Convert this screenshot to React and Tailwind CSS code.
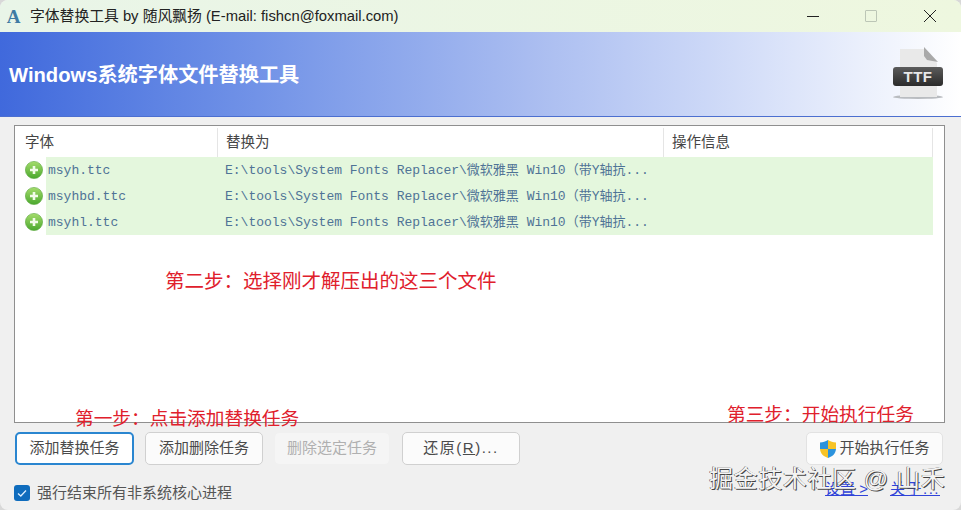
const CJK = 'font-["Liberation_Sans","Noto_Sans_CJK_SC",sans-serif]'
const path = 'E:\\tools\\System Fonts Replacer\\微软雅黑 Win10（带Y轴抗...'

const rows = ['msyh.ttc', 'msyhbd.ttc', 'msyhl.ttc']

function AddIcon() {
  return (
    <svg width="18" height="18" viewBox="0 0 18 18" className="shrink-0">
      <defs>
        <linearGradient id="addGreen" x1="0" y1="0" x2="0" y2="1">
          <stop offset="0" stopColor="#a5dc6c" />
          <stop offset="1" stopColor="#4aa82e" />
        </linearGradient>
      </defs>
      <circle cx="9" cy="9" r="8.6" fill="url(#addGreen)" stroke="#5aa83c" strokeWidth="0.6" />
      <path d="M9 5v8M5 9h8" stroke="#f2fbe9" strokeWidth="2.6" />
    </svg>
  )
}

function ShieldIcon() {
  return (
    <svg width="18" height="20" viewBox="0 0 18 20" className="shrink-0">
      <path d="M9 1C6.5 2.6 4 3.2 1 3.4V10h8z" fill="#2b93dd" />
      <path d="M9 1c2.500 1.600 5 2.200 8 2.400V10H9z" fill="#f7c326" />
      <path d="M1 10c.3 4.500 3.500 7.500 8 9v-9z" fill="#f7c326" />
      <path d="M17 10c-.3 4.500-3.500 7.500-8 9v-9z" fill="#2b93dd" />
    </svg>
  )
}

function TtfIcon() {
  return (
    <div className="relative w-[50px] h-[54px]">
      <svg width="50" height="54" viewBox="0 0 50 54" className="absolute inset-0">
        <ellipse cx="25" cy="50" rx="25" ry="2" fill="#b9bcc0" />
        <path d="M7 2h24l13 14v34H7z" fill="#e9e9e9" />
        <path d="M31 0l14 15-11-2-3-4z" fill="#a9a9a9" />
      </svg>
      <div className="absolute left-0 top-[20px] w-[50px] h-[19px] rounded-[3px] bg-gradient-to-b from-[#5c5c5c] to-[#2b2b2b] flex items-center justify-center text-[15px] font-bold leading-none tracking-[0.5px] text-[#e8e8e8] font-['Liberation_Sans',sans-serif]">
        TTF
      </div>
    </div>
  )
}

function Btn({ children, className = '' }) {
  return (
    <div className={`h-[33px] flex items-center justify-center rounded-[5px] border text-[15px] ${className}`}>
      {children}
    </div>
  )
}

export default function App() {
  return (
    <div className={`relative w-[961px] h-[510px] overflow-hidden bg-[#d8d8d8] ${CJK}`}>
      <div className="h-full flex flex-col rounded-t-[8px] rounded-b-[8px] overflow-hidden bg-[#f0f0f0]">
        {/* Title bar */}
        <div className="h-[32px] shrink-0 flex items-center bg-gradient-to-r from-[#e9f5e8] to-[#eef7df] pl-[5px]">
          <span className="w-[17px] text-center text-[19px] font-bold leading-none text-[#3f7ba3] font-['Liberation_Serif',serif]">A</span>
          <span className="ml-[8px] text-[14.800px] text-[#222]">字体替换工具 by 随风飘扬 (E-mail: fishcn@foxmail.com)</span>
          <div className="ml-auto flex items-center">
            <svg width="12" height="12" viewBox="0 0 12 12" className="mr-[46px]"><path d="M0 6.500h12" stroke="#222" strokeWidth="1" /></svg>
            <div className="w-[12px] h-[12px] mr-[47px] rounded-[1px] border border-[#bcc6b6]" />
            <svg width="12" height="12" viewBox="0 0 12 12" className="mr-[25px]"><path d="M0 0l12 12M12 0L0 12" stroke="#222" strokeWidth="1" /></svg>
          </div>
        </div>

        {/* Banner */}
        <div className="h-[85px] shrink-0 flex items-center justify-between pl-[9px] pr-[18px] bg-gradient-to-r from-[#4069dc] via-[#a9bcf0] via-[55%] to-white border-b border-b-[#4c6fd0]">
          <span className="text-[20.200px] font-bold text-white mt-[2px]">Windows系统字体文件替换工具</span>
          <TtfIcon />
        </div>

        {/* Task list */}
        <div className="ml-[14px] mr-[16px] mt-[8px] h-[298px] shrink-0 bg-white border border-[#8f8f8f] pt-[2px] pr-[11px] flex flex-col">
          <div className="h-[29px] shrink-0 flex text-[14.500px] text-[#444]">
            <div className="w-[203px] pl-[10px] flex items-center border-r border-r-[#e5e5e5]">字体</div>
            <div className="w-[446px] pl-[8px] flex items-center border-r border-r-[#e5e5e5]">替换为</div>
            <div className="flex-1 pl-[8px] flex items-center border-r border-r-[#e5e5e5]">操作信息</div>
          </div>
          <div className="flex flex-col font-['Liberation_Mono','Noto_Sans_CJK_SC',monospace] text-[13px] text-[#4f7396]">
            {rows.map((name) => (
              <div key={name} className="h-[26px] flex items-center">
                <div className="w-[31px] pl-[10px] shrink-0"><AddIcon /></div>
                <div className="flex-1 h-full flex items-center bg-[#e4f7dd] pl-[2px] pt-[2px] whitespace-nowrap">
                  <span className="w-[177px]">{name}</span>
                  <span>{path}</span>
                </div>
              </div>
            ))}
          </div>
        </div>

        {/* Buttons */}
        <div className="mx-[15px] mt-[9px] shrink-0 flex items-center text-[#4a4a4a]">
          <Btn className="w-[119px] bg-white border-2 border-[#2a86d0]">添加替换任务</Btn>
          <Btn className="w-[118px] ml-[11px] bg-[#fbfbfb] border-[#d0d0d0]">添加删除任务</Btn>
          <Btn className="w-[116px] ml-[11px] bg-[#f5f5f5] border-[#f0f0f0] text-[#b0b0b0]">删除选定任务</Btn>
          <Btn className="w-[118px] ml-[12px] bg-[#fbfbfb] border-[#d0d0d0] tracking-[1.500px]">
            还原(<span className="underline">R</span>)...
          </Btn>
          <Btn className="w-[137px] ml-auto mr-[3px] gap-[2px] bg-[#fbfbfb] border-[#e2e2e2]">
            <ShieldIcon />
            开始执行任务
          </Btn>
        </div>

        {/* Footer */}
        <div className="mx-[14px] mt-[17px] flex items-center text-[15px] text-[#555]">
          <div className="w-[16px] h-[16px] rounded-[3px] bg-[#0f6cbd] flex items-center justify-center">
            <svg width="12" height="12" viewBox="0 0 12 12"><path d="M2 6.500l2.800 2.500L10 3.500" fill="none" stroke="#dbeeff" strokeWidth="1.300" /></svg>
          </div>
          <span className="ml-[7px]">强行结束所有非系统核心进程</span>
          <div className="ml-auto mr-[7px] -mt-[8px] flex gap-[22px] text-[15px] text-[#2f43d8] underline">
            <span>设置 &gt;</span>
            <span className="tracking-[1.500px]">关于...</span>
          </div>
        </div>
      </div>

      {/* Annotations drawn over the window */}
      <span className="absolute left-[165px] top-[269px] text-[19.500px] leading-[24px] text-[#e0202c] whitespace-nowrap">第二步：选择刚才解压出的这三个文件</span>
      <span className="absolute left-[75px] top-[407px] text-[18.700px] leading-[24px] text-[#e0202c] whitespace-nowrap">第一步：点击添加替换任务</span>
      <span className="absolute left-[727px] top-[403px] text-[18.700px] leading-[24px] text-[#e0202c] whitespace-nowrap">第三步：开始执行任务</span>
      <span className="absolute left-[709px] top-[463px] text-[24px] leading-[32px] tracking-[0.6px] text-[#f4f4f4] whitespace-nowrap [text-shadow:1px_1px_0_#444,-0.5px_-0.5px_0_#444]">掘金技术社区 @ 山禾</span>
    </div>
  )
}
